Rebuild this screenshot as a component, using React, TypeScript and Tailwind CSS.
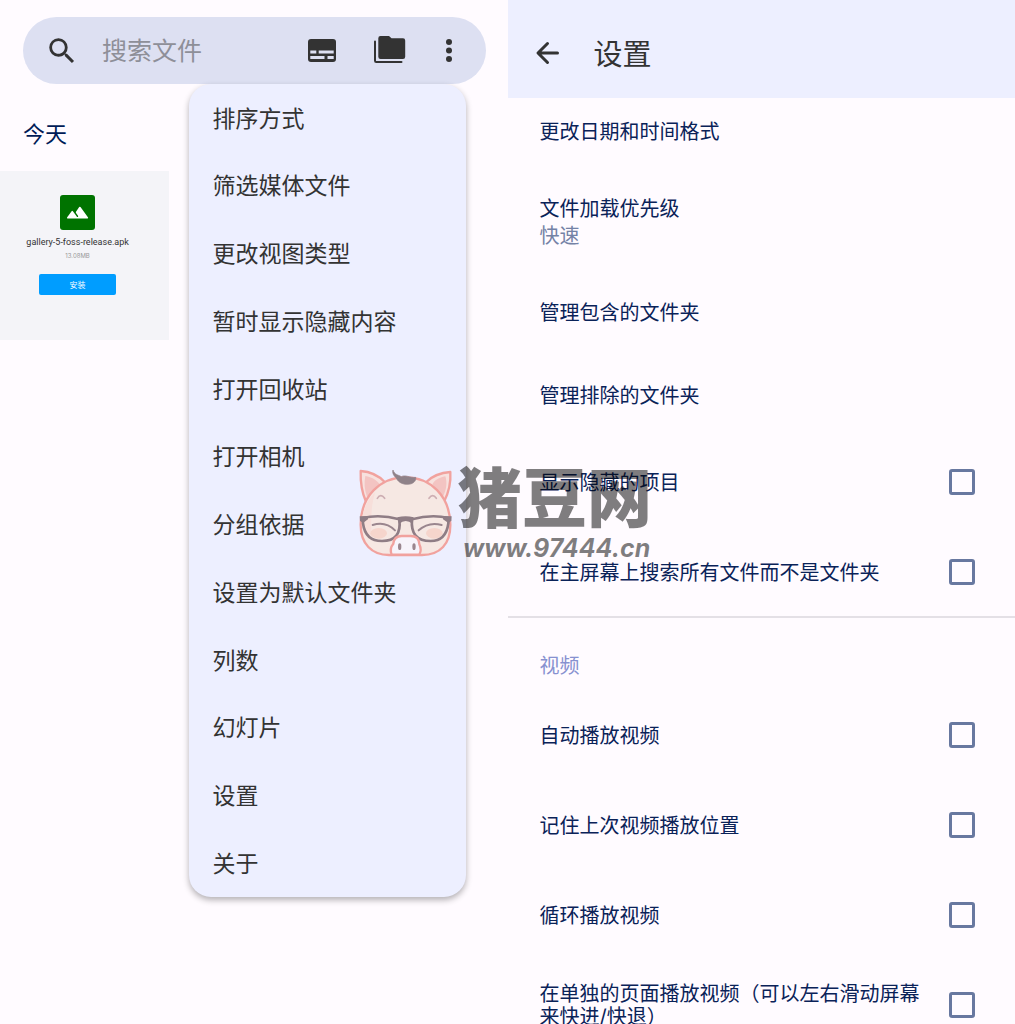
import { MdSearch } from 'react-icons/md';

const MENU_ITEMS = [
    '排序方式',
    '筛选媒体文件',
    '更改视图类型',
    '暂时显示隐藏内容',
    '打开回收站',
    '打开相机',
    '分组依据',
    '设置为默认文件夹',
    '列数',
    '幻灯片',
    '设置',
    '关于',
];

const VIDEO_SETTINGS = [
    { id: 'autoplay', label: '自动播放视频' },
    { id: 'remember-position', label: '记住上次视频播放位置' },
    { id: 'loop', label: '循环播放视频' },
    { id: 'separate-page', label: '在单独的页面播放视频（可以左右滑动屏幕来快进/快退）' },
];

function SubtitlesIcon() {
    return (
        <svg width="34" height="34" viewBox="0 0 34 34" fill="none">
            <rect x="3" y="5" width="28" height="23" rx="3" fill="#333333" />
            <path d="M5.300 16.500h6v3h-6zM13.700 16.500h15v3h-15zM5.300 22h14.200v3h-14.200zM22.500 22h6.200v3h-6.200z" fill="#dde0f2" />
        </svg>
    );
}

function FoldersIcon() {
    return (
        <svg width="34" height="34" viewBox="0 0 34 34" fill="none">
            <path d="M7.500 2h8.500l2.500 2.300h11.500a2.200 2.200 0 0 1 2.200 2.200v16.300a2.200 2.200 0 0 1-2.200 2.200h-22.500a2.200 2.200 0 0 1-2.200-2.200v-18.600a2.200 2.200 0 0 1 2.200-2.200z" fill="#333333" />
            <path d="M2 7.500v19.200a1.200 1.200 0 0 0 1.200 1.200h25.300" stroke="#333333" strokeWidth="2" strokeLinecap="round" />
        </svg>
    );
}

function SearchBar() {
    return (
        <div className="mr-[22px] ml-[23px] flex h-[67px] items-center gap-[23px] rounded-full bg-[#dde0f2] pr-[29px] pl-[22px] text-[#333333]">
            <MdSearch size={34} className="shrink-0" />
            <input
                type="text"
                aria-label="搜索文件"
                placeholder="搜索文件"
                className="min-w-0 flex-1 bg-transparent pt-0.5 text-[25px] outline-none placeholder:text-[#8e8f98]"
            />
            <div className="flex items-center gap-[34px]">
                <button aria-label="媒体">
                    <SubtitlesIcon />
                </button>
                <button aria-label="文件夹">
                    <FoldersIcon />
                </button>
                <button aria-label="更多">
                    <svg width="16" height="34" viewBox="0 0 16 34" fill="currentColor">
                        <circle cx="8" cy="8" r="3" />
                        <circle cx="8" cy="16.500" r="3" />
                        <circle cx="8" cy="25" r="3" />
                    </svg>
                </button>
            </div>
        </div>
    );
}

function Thumbnail() {
    return (
        <div className="flex aspect-square flex-col items-center bg-[#f4f4f8] pt-6 pr-[14px]">
            <svg width="35" height="35" viewBox="0 0 35 35" className="shrink-0">
                <rect width="35" height="35" rx="3" fill="#007300" />
                <path d="M7.500 23.500q-1-.2-.3-1.300l4.400-6q.6-.8 1.300 0l2.600 3.500 1.400 2q.6.6 1.100 0 .4-.4 0-1l-2-2.800q-.4-.5 0-1.100l3.200-4.700q.6-.8 1.300 0l7.400 10.100q.7 1.100-.3 1.300z" fill="#fff" />
            </svg>
            <p className="mt-[5px] font-[Roboto] text-[9px] leading-[14px] whitespace-nowrap text-[#333333]">gallery-5-foss-release.apk</p>
            <p className="text-[6px] leading-[14px] text-[#999999]">13.08MB</p>
            <button className="mt-[11px] h-[21px] w-[77px] shrink-0 rounded-[2px] bg-[#009dff] text-[8px] text-white">安装</button>
        </div>
    );
}

function OverflowMenu() {
    return (
        <div
            role="menu"
            className="absolute top-[84px] right-[42px] grid min-h-[813px] w-[277px] auto-rows-fr overflow-hidden rounded-[22px] bg-[#edefff] shadow-[0_3px_6px_rgba(0,0,0,0.3)]"
        >
            {MENU_ITEMS.map((item) => (
                <button key={item} role="menuitem" className="px-6 pt-0.5 text-left text-[23px] text-[#333333]">
                    {item}
                </button>
            ))}
        </div>
    );
}

function SettingLink({ title, value }: { title: string; value?: string }) {
    return (
        <button className={`flex w-full flex-col justify-center gap-1 pt-0.5 pl-8 text-left ${value ? 'h-[98px]' : 'h-[83px]'}`}>
            <span>{title}</span>
            {value && <span className="text-[#7482a6]">{value}</span>}
        </button>
    );
}

function SettingCheckbox({ id, label }: { id: string; label: string }) {
    return (
        <div className="flex h-[90px] items-center justify-between gap-6 pr-10 pl-8">
            <label htmlFor={id} className="pt-0.5">{label}</label>
            <input
                id={id}
                type="checkbox"
                className="size-[26px] shrink-0 appearance-none rounded-[3px] border-3 border-[#6878a0] checked:bg-[#6878a0]"
            />
        </div>
    );
}

function Watermark() {
    return (
        <div className="pointer-events-none absolute top-[464px] left-[358px] flex" aria-hidden="true">
            <svg className="mt-1 opacity-60" width="97" height="90" viewBox="0 0 291 270" fill="none">
                <path d="M8 9C38 11 62 23 80 42L24 101C10 70 7 40 8 9zM277 12C247 14 222 25 205 42L258 101C274 70 279 42 277 12z" fill="#ffd9c9" stroke="#f5705f" strokeWidth="7" strokeLinejoin="round" />
                <path d="M22 24C42 27 57 37 65 49L27 86C19 65 18 43 22 24zM262 25C243 28 229 38 223 49L255 86C266 64 268 43 262 25z" fill="#f7a99b" />
                <path d="M142 28C67 28 9 84 8 168C7 228 42 261 93 261H192C246 261 278 228 277 168C275 84 218 28 142 28z" fill="#fde4d2" stroke="#f5705f" strokeWidth="7" />
                <path d="M42 218Q8 200 12 154Q18 105 52 72Q34 123 42 218z" fill="#ffd5c2" />
                <ellipse cx="62" cy="196" rx="25" ry="16" fill="#fdc5ab" />
                <ellipse cx="229" cy="196" rx="25" ry="16" fill="#fdc5ab" />
                <path d="M105 6C110 21 120 20 130 26C142 19 155 30 173 28C176 39 164 50 147 49C130 49 119 40 115 30C107 24 102 14 105 6z" fill="#513a3b" stroke="#513a3b" strokeWidth="2" />
                <path d="M58 91Q68 75 80 91M213 91Q224 75 235 91" stroke="#b98480" strokeWidth="5" strokeLinecap="round" />
                <path d="M44 171Q82 158 111 187M182 187Q212 160 251 171" stroke="#644144" strokeWidth="6" strokeLinecap="round" />
                <path d="M14 150Q66 138 124 154Q132 219 72 219Q22 219 15 166zM272 150Q220 138 162 154Q156 219 218 219Q264 219 271 166z" stroke="#513235" strokeWidth="8" strokeLinejoin="round" />
                <path d="M5 145L30 144V154L16 164L6 159zM281 145L255 144V154L270 164L280 159zM118 148Q143 142 167 148L164 168Q143 150 123 168z" fill="#513235" />
                <path d="M101 260Q94 241 106 227Q108 204 131 204H158Q184 204 184 229Q192 246 184 260z" fill="#fff8fa" stroke="#f5705f" strokeWidth="7" />
                <ellipse cx="125" cy="236" rx="5" ry="10" fill="#644144" />
                <ellipse cx="168" cy="236" rx="5" ry="10" fill="#644144" />
            </svg>
            <div className="flex flex-col text-black/50">
                <span className="pl-0.5 text-[65px] leading-[70px] font-black">猪豆网</span>
                <span className="pl-2 text-[25px] leading-7 font-bold italic">www.97444.cn</span>
            </div>
        </div>
    );
}

export default function App() {
    return (
        <div
            lang="zh-CN"
            className="relative grid h-screen grid-cols-2 overflow-hidden bg-[#fffbff] font-['Inter','Noto_Sans_CJK_SC',sans-serif]"
        >
            {/* Gallery */}
            <main className="relative min-w-0 pt-[17px]">
                <SearchBar />
                <h2 className="mt-8 pl-[23px] text-[22px] leading-9 text-[#001b57]">今天</h2>
                <div className="mt-[19px] grid grid-cols-3">
                    <Thumbnail />
                </div>
                <OverflowMenu />
            </main>

            {/* Settings */}
            <section className="min-w-0 text-xl leading-[23px] text-[#0a2258]">
                <header className="flex h-[98px] items-center gap-8 bg-[#edefff] pt-3 pl-6 text-[#333333]">
                    <button aria-label="返回">
                        <svg width="30" height="30" viewBox="0 0 30 30" fill="none" stroke="currentColor" strokeWidth="3" strokeLinecap="round" strokeLinejoin="round">
                            <path d="M25.500 13H6.500M15.500 3.500L6 13l9.500 9.500" />
                        </svg>
                    </button>
                    <h1 className="text-[29px] leading-9">设置</h1>
                </header>
                <div className="-mt-2">
                    <SettingLink title="更改日期和时间格式" />
                    <SettingLink title="文件加载优先级" value="快速" />
                    <SettingLink title="管理包含的文件夹" />
                    <SettingLink title="管理排除的文件夹" />
                    <SettingCheckbox id="show-hidden" label="显示隐藏的项目" />
                    <SettingCheckbox id="search-all" label="在主屏幕上搜索所有文件而不是文件夹" />
                </div>
                <h2 className="-mt-px border-t-2 border-[#e4e0e6] pt-[37px] pb-3 pl-8 text-[#8791d0]">视频</h2>
                {VIDEO_SETTINGS.map((setting) => (
                    <SettingCheckbox key={setting.id} id={setting.id} label={setting.label} />
                ))}
            </section>

            <Watermark />
        </div>
    );
}
